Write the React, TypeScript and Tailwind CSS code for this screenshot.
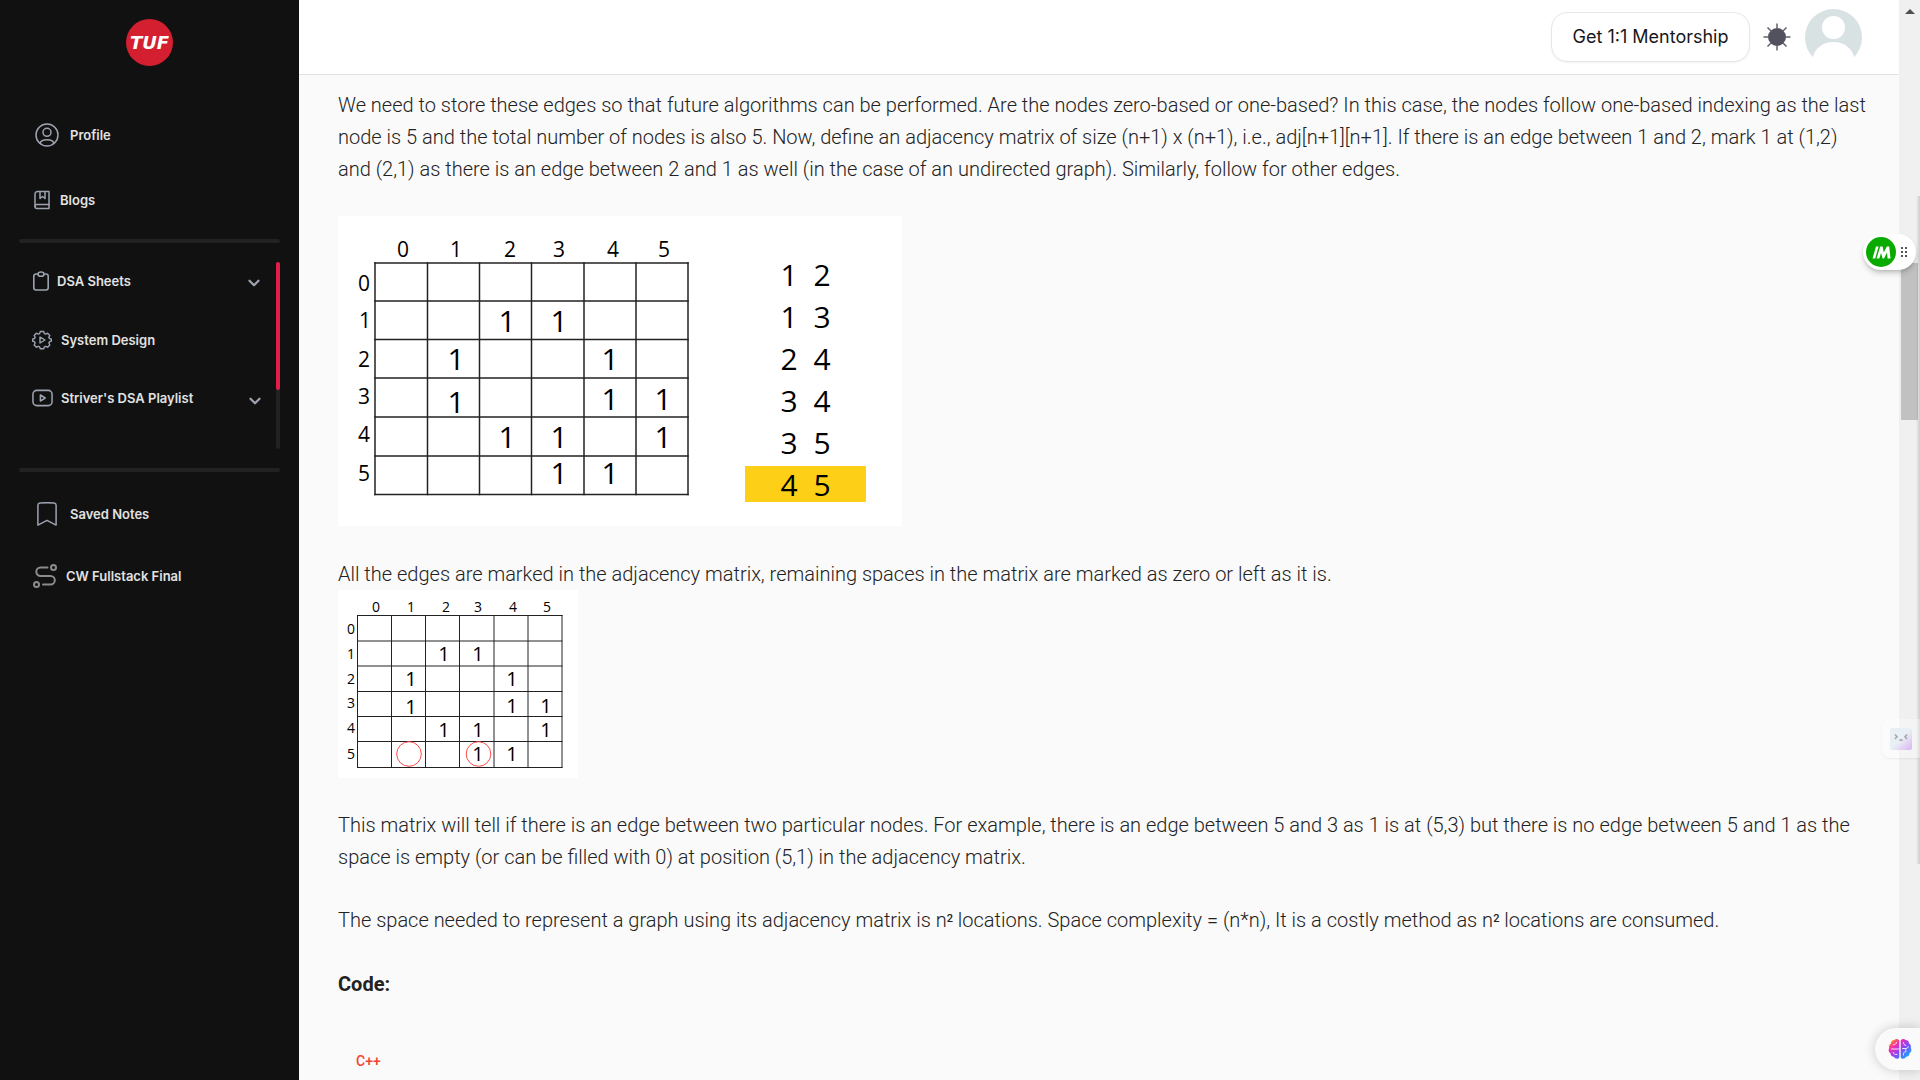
import React from "react";
import { ChevronDown } from "lucide-react";

type IconProps = { className?: string };

const stroke = {
  fill: "none",
  stroke: "currentColor",
  strokeLinecap: "round" as const,
  strokeLinejoin: "round" as const,
};

function ProfileIcon({ className }: IconProps) {
  return (
    <svg viewBox="0 0 24 24" className={className} {...stroke} strokeWidth="1.5" aria-hidden="true">
      <circle cx="12" cy="12" r="11" />
      <circle cx="12" cy="9.3" r="4" />
      <path d="M5 20.3c.6-2.3 3.200-3.500 7-3.500s6.400 1.200 7 3.500" />
    </svg>
  );
}

function BlogIcon({ className }: IconProps) {
  return (
    <svg viewBox="0 0 18 20" className={className} {...stroke} strokeWidth="1.5" aria-hidden="true">
      <path d="M16 14.500V1.500H4.500A2.500 2.500 0 0 0 2 4v12.500" />
      <path d="M16 14.500H4a2 2 0 0 0 0 4h12z" />
      <path d="M7 1.500v7l2.500-2 2.500 2v-7" />
    </svg>
  );
}

function ClipboardIcon({ className }: IconProps) {
  return (
    <svg viewBox="0 0 18 20" className={className} {...stroke} strokeWidth="1.600" aria-hidden="true">
      <path d="M5.500 3H4a2.200 2.200 0 0 0-2.200 2.200v11.600A2.200 2.200 0 0 0 4 19h10a2.200 2.200 0 0 0 2.200-2.200V5.200A2.200 2.200 0 0 0 14 3h-1.500" />
      <path d="M6 3.200C6 1.800 7.200 1 9 1s3 .8 3 2.200S10.800 5.300 9 5.300 6 4.600 6 3.200z" />
    </svg>
  );
}

function GearPlayIcon({ className }: IconProps) {
  return (
    <svg viewBox="0 0 20 20" className={className} {...stroke} strokeWidth="1.400" aria-hidden="true">
      <path d="M8.300 1.500h3.400l.7 2.100 1.200.5 2-.9 2.200 2.200-.9 2 .5 1.100 2 .7v1.800l-2 .8-.5 1.200.9 2-2.200 2.200-2-.9-1.200.5-.7 1.900H8.300l-.7-1.900-1.200-.5-2 .9-2.200-2.200.9-2-.5-1.200-2-.8V9.200l2-.7.5-1.100-.9-2 2.200-2.200 2 .9 1.200-.5z" />
      <path d="M8 7v6l5-3z" />
    </svg>
  );
}

function VideoIcon({ className }: IconProps) {
  return (
    <svg viewBox="0 0 22 18" className={className} {...stroke} strokeWidth="1.600" aria-hidden="true">
      <rect x="1" y="1" width="20" height="16" rx="4" />
      <path d="M8.800 5.800v6.400l5-3.200z" />
    </svg>
  );
}

function BookmarkIcon({ className }: IconProps) {
  return (
    <svg viewBox="0 0 20 24" className={className} {...stroke} strokeWidth="1.500" aria-hidden="true">
      <path d="M.9 3.200C.9 2 1.600 1.300 2.800 1.100a60 60 0 0 1 14.400 0c1.200.2 1.900.9 1.900 2.100v19.900L10 18.300.9 23.100z" />
    </svg>
  );
}

function RouteIcon({ className }: IconProps) {
  return (
    <svg viewBox="0 0 24 24" className={className} {...stroke} strokeWidth="2" aria-hidden="true">
      <circle cx="20.500" cy="3.500" r="2.500" />
      <circle cx="3.500" cy="20.500" r="2.500" />
      <path d="M14.500 3.500H7.500a4.200 4.200 0 0 0 0 8.400h10a4.300 4.300 0 0 1 0 8.600H10" />
    </svg>
  );
}

function SunIcon({ className }: IconProps) {
  return (
    <svg viewBox="0 0 28 28" className={className} aria-hidden="true">
      <circle cx="14" cy="14" r="9" fill="#52525e" />
      <path
        d="M14 .5v5M14 22.500v5M.5 14h5M22.500 14h5M4.500 4.500l3.500 3.500M20 20l3.500 3.500M4.500 23.500L8 20M20 8l3.500-3.500"
        stroke="#62626c"
        strokeWidth="1.500"
      />
    </svg>
  );
}

function AvatarIcon({ className }: IconProps) {
  return (
    <svg viewBox="0 0 57 57" className={className} aria-hidden="true">
      <circle cx="28.500" cy="28.500" r="28.500" fill="#d9e2e3" />
      <circle cx="28.500" cy="18.500" r="11.500" fill="#fff" />
      <path d="M8 48c2-9 10.500-15 20.500-15S47 39 49 48v9H8z" fill="#fff" />
    </svg>
  );
}

function BrainIcon({ className }: IconProps) {
  return (
    <svg viewBox="0 0 24 22" className={className} aria-hidden="true">
      <defs>
        <linearGradient id="brain" x1="0" y1="0" x2="1" y2="1">
          <stop offset="0.100" stopColor="#ff8a1f" />
          <stop offset="0.300" stopColor="#f52cae" />
          <stop offset="0.550" stopColor="#8b46f5" />
          <stop offset="0.850" stopColor="#1fa0ff" />
        </linearGradient>
      </defs>
      <path
        d="M11.300 2.500C10.500.6 7.500.4 6.300 2 4.300 2 2.800 3.600 3 5.600 1.300 6.500.6 8.400 1.200 10c-1.200 1.800-.6 4.300 1.300 5.200 0 2 1.500 3.400 3.300 3.600 1.200 2.400 4.600 2.600 5.500.6zM12.700 2.500c.8-1.900 3.800-2.100 5-.5 2 0 3.500 1.600 3.300 3.600 1.700.9 2.400 2.800 1.800 4.400 1.200 1.800.6 4.300-1.300 5.200 0 2-1.500 3.400-3.300 3.600-1.200 2.400-4.600 2.600-5.500.6z"
        fill="url(#brain)"
      />
      <path
        d="M3.500 11h7.500M5.500 6.800c2 0 2.800-1.200 3-2.300M5.300 14.500c.2 1.500 1.600 2.300 3.700 2M15.500 4.500c0 1.800.5 2.500 2.300 2.800M14.500 10.500h3c1.500 0 2.500-.8 2.800-1.800M17.800 10.500v2M15.500 17v-1.500c0-1 1-1.800 2.500-1.800"
        fill="none"
        stroke="#fff"
        strokeOpacity="0.850"
        strokeWidth="1"
        strokeLinecap="round"
      />
    </svg>
  );
}

const itemText = "font-['Inter',sans-serif] text-[13px] leading-5 font-semibold text-[#e2e2e2]";

function Divider() {
  return <hr className="mx-[19px] h-1 rounded-full border-0 bg-[#222222]" />;
}

function Sidebar() {
  return (
    <aside className="w-[299px] shrink-0 bg-[#111111] text-[#9ca3af]">
      <a href="#home" className="mx-auto mt-[19px] flex size-[47px] items-center justify-center rounded-full bg-[#d41f30]">
        <span className="font-['DejaVu_Sans',sans-serif] text-lg leading-none font-bold text-white italic">TUF</span>
      </a>

      <nav aria-label="Main" className="mt-[54px]">
        <a href="#profile" className="flex h-[30px] items-center gap-[11px] pl-[35px]">
          <ProfileIcon className="size-6" />
          <span className={itemText}>Profile</span>
        </a>
        <a href="#blogs" className="mt-[35px] flex h-[30px] items-center gap-[9px] pl-[33px]">
          <BlogIcon className="h-5 w-[18px]" />
          <span className={itemText}>Blogs</span>
        </a>
      </nav>

      <div className="mt-6">
        <Divider />
      </div>

      <div className="mt-[19px] mr-[19px] flex justify-between">
        <nav aria-label="Courses" className="flex w-[264px] flex-col">
          <button type="button" className="flex h-[38px] items-center pr-px pl-8 text-left">
            <ClipboardIcon className="h-5 w-[18px]" />
            <span className={itemText + " ml-[7px] grow"}>DSA Sheets</span>
            <ChevronDown className="mt-1 size-[18px]" strokeWidth={3} />
          </button>
          <a href="#system-design" className="mt-[21px] flex h-[38px] items-center gap-[9px] pl-8">
            <GearPlayIcon className="size-5" />
            <span className={itemText}>System Design</span>
          </a>
          <button type="button" className="mt-5 flex h-[38px] items-center pl-8 text-left">
            <VideoIcon className="h-[18px] w-[21px]" />
            <span className={itemText + " ml-2 grow"}>Striver's DSA Playlist</span>
            <ChevronDown className="mt-1.5 size-[18px]" strokeWidth={3} />
          </button>
        </nav>
        <div className="h-[187px] w-1 rounded-full bg-[#222222]">
          <div className="h-32 rounded-full bg-[#e11d48]" />
        </div>
      </div>

      <div className="mt-[19px]">
        <Divider />
      </div>

      <nav aria-label="Personal" className="mt-[27px]">
        <a href="#notes" className="flex h-[30px] items-center gap-[13px] pl-[37px]">
          <BookmarkIcon className="h-6 w-5" />
          <span className={itemText}>Saved Notes</span>
        </a>
        <a href="#cw-fullstack" className="mt-8 flex h-[30px] items-center gap-[9px] pl-[33px]">
          <RouteIcon className="size-6 text-[#8b8b8b]" />
          <span className={itemText}>CW Fullstack Final</span>
        </a>
      </nav>
    </aside>
  );
}

function Header() {
  return (
    <header className="flex h-[75px] items-center justify-end border-b border-[#e2e2e4] bg-white pr-[37px]">
      <button
        type="button"
        className="h-[50px] w-[199px] rounded-2xl border border-gray-200 bg-white font-['Inter',sans-serif] text-lg text-[#18181b] shadow-xs"
      >
        Get 1:1 Mentorship
      </button>
      <button type="button" aria-label="Toggle theme" className="ml-[13px]">
        <SunIcon className="size-7" />
      </button>
      <button type="button" aria-label="Account" className="ml-[14px]">
        <AvatarIcon className="size-[57px]" />
      </button>
    </header>
  );
}

type Point = { x: number; y: number; t: string };
const pts = (list: [number, number, string][]): Point[] => list.map(([x, y, t]) => ({ x, y, t }));

const bigLabels = pts([
  [65, 41, "0"], [118, 41, "1"], [172, 41, "2"], [221, 41, "3"], [275, 41, "4"], [326, 41, "5"],
  [26, 75, "0"], [27, 112, "1"], [26, 151, "2"], [26, 188, "3"], [26, 226, "4"], [26, 265, "5"],
]);
const bigMarks = pts([
  [169, 116, "1"], [221, 116, "1"], [118, 154, "1"], [272, 154, "1"], [118, 197, "1"], [272, 194, "1"],
  [325, 194, "1"], [169, 232, "1"], [221, 232, "1"], [325, 232, "1"], [221, 268, "1"], [272, 268, "1"],
]);
const pairs = pts([
  [451, 70, "1"], [484, 70, "2"], [451, 112, "1"], [484, 112, "3"], [451, 154, "2"], [484, 154, "4"],
  [451, 196, "3"], [484, 196, "4"], [451, 238, "3"], [484, 238, "5"], [451, 280, "4"], [484, 280, "5"],
]);
const smallLabels = pts([
  [38, 22, "0"], [73, 22, "1"], [108, 22, "2"], [140, 22, "3"], [175, 22, "4"], [209, 22, "5"],
  [13, 44, "0"], [13, 69, "1"], [13, 94, "2"], [13, 118, "3"], [13, 143, "4"], [13, 169, "5"],
]);
const smallMarks = pts([
  [106, 71, "1"], [140, 71, "1"], [73, 96, "1"], [174, 96, "1"], [73, 124, "1"], [174, 123, "1"],
  [208, 123, "1"], [106, 147, "1"], [140, 147, "1"], [208, 147, "1"], [140, 171, "1"], [174, 171, "1"],
]);

function Labels({ points, size }: { points: Point[]; size: number }) {
  return (
    <g fontSize={size} textAnchor="middle">
      {points.map((p) => (
        <text key={p.x + "-" + p.y} x={p.x} y={p.y}>
          {p.t}
        </text>
      ))}
    </g>
  );
}

function Grid({ xs, ys, width }: { xs: number[]; ys: number[]; width: number }) {
  const left = xs[0];
  const right = xs[xs.length - 1];
  const top = ys[0];
  const bottom = ys[ys.length - 1];
  return (
    <g stroke="#222" strokeWidth={width} strokeLinecap="square">
      {xs.map((x) => (
        <line key={"x" + x} x1={x} x2={x} y1={top} y2={bottom} />
      ))}
      {ys.map((y) => (
        <line key={"y" + y} x1={left} x2={right} y1={y} y2={y} />
      ))}
    </g>
  );
}

function EdgeFigure() {
  return (
    <svg
      viewBox="0 0 564 310"
      className="mt-[31px] block w-[564px] max-w-full bg-white fill-black font-['Open_Sans',sans-serif] font-normal"
      role="img"
      aria-label="Adjacency matrix being filled from the list of edges"
    >
      <Grid xs={[37, 89.500, 141.500, 193.500, 246, 298, 350]} ys={[47, 85, 123.500, 162, 201, 240, 278.500]} width={1.500} />
      <Labels points={bigLabels} size={21} />
      <Labels points={bigMarks} size={30} />
      <rect x="407" y="250" width="121" height="36" fill="#fdd017" />
      <Labels points={pairs} size={30} />
    </svg>
  );
}

function MatrixFigure() {
  return (
    <svg
      viewBox="0 0 240 188"
      className="block w-60 max-w-full bg-white font-['Open_Sans',sans-serif] font-normal"
      role="img"
      aria-label="Completed adjacency matrix"
    >
      <Grid xs={[19.500, 53.500, 87.500, 121.500, 156, 190, 224]} ys={[25.500, 51, 76, 101.500, 126.500, 151.500, 177.500]} width={1} />
      <Labels points={smallLabels} size={14} />
      <Labels points={smallMarks} size={20} />
      <g fill="none" stroke="#ff4a4a" strokeWidth="1">
        <circle cx="71" cy="164" r="12.300" />
        <circle cx="140.500" cy="164" r="12.300" />
      </g>
    </svg>
  );
}

function Article() {
  return (
    <article className="pt-[14px] pr-[29px] pl-[39px] font-['Roboto',sans-serif] text-xl leading-8 font-light text-[#222222]">
      <p>
        We need to store these edges so that future algorithms can be performed. Are the nodes zero-based or one-based?
        In this case, the nodes follow one-based indexing as the last node is 5 and the total number of nodes is also 5.
        Now, define an adjacency matrix of size (n+1) x (n+1), i.e., adj[n+1][n+1]. If there is an edge between 1 and 2,
        mark 1 at (1,2) and (2,1) as there is an edge between 2 and 1 as well (in the case of an undirected graph).
        Similarly, follow for other edges.
      </p>
      <EdgeFigure />
      <p className="mt-8">
        All the edges are marked in the adjacency matrix, remaining spaces in the matrix are marked as zero or left as
        it is.
      </p>
      <MatrixFigure />
      <p className="mt-[31px]">
        This matrix will tell if there is an edge between two particular nodes. For example, there is an edge between 5
        and 3 as 1 is at (5,3) but there is no edge between 5 and 1 as the space is empty (or can be filled with 0) at
        position (5,1) in the adjacency matrix.
      </p>
      <p className="mt-[31px]">
        The space needed to represent a graph using its adjacency matrix is n
        <sup className="text-[11px] font-medium">2</sup> locations. Space complexity = (n*n), It is a costly method as n
        <sup className="text-[11px] font-medium">2</sup> locations are consumed.
      </p>
      <h2 className="mt-8 text-xl leading-8 font-bold">Code:</h2>
      <div role="tablist" className="mt-[49px] flex pl-[18px]">
        <button type="button" role="tab" aria-selected="true" className="text-sm leading-6 font-medium text-[#f4442e]">
          C++
        </button>
      </div>
    </article>
  );
}

function ScrollTrack() {
  return (
    <div className="relative w-[21px] shrink-0 bg-[#f0f0f0]" aria-hidden="true">
      <div className="flex h-[263px] justify-center pt-[9px]">
        <svg viewBox="0 0 10 5" className="h-[5px] w-[10px]">
          <path d="M0 5l5-5 5 5z" fill="#505050" />
        </svg>
      </div>
      <div className="ml-0.5 h-[157px] w-[17px] bg-[#c1c1c1]" />
      <div className="absolute top-[196px] right-0 h-[668px] w-1 bg-linear-to-r from-transparent to-black/15" />
    </div>
  );
}

function Widgets() {
  return (
    <>
      <div className="fixed top-[234px] right-1 flex h-9 w-[53px] items-center rounded-full bg-white pl-[3px] shadow-md shadow-black/20">
        <button type="button" aria-label="Open helper" className="flex size-[30px] items-center justify-center rounded-full bg-[#0aab00]">
          <svg viewBox="0 0 19 13" className="h-[13px] w-[19px]" aria-hidden="true">
            <path
              d="M.5 12.500L4 .5h2.600l-3.400 12zM4.600 12.500L8.200.5h2.400l1.200 6L14.800.5h2.400l1.300 12h-2.900l-.6-6-3 6h-1.400L9 7l-1.700 5.500z"
              fill="#fff"
            />
          </svg>
        </button>
        <svg viewBox="0 0 6 10" className="ml-[5px] h-[10px] w-1.5" fill="#555" aria-hidden="true">
          <path d="M0 0h2v2H0zM4 0h2v2H4zM0 4h2v2H0zM4 4h2v2H4zM0 8h2v2H0zM4 8h2v2H4z" />
        </svg>
      </div>
      <button
        type="button"
        aria-label="Open companion"
        className="fixed top-[719px] right-0 flex h-[39px] w-[38px] items-center rounded-l-lg bg-white/30 pl-2 shadow-sm shadow-black/5"
      >
        <span className="flex size-[22px] items-start justify-center rounded-xs bg-linear-to-br from-[#e9f0f5] from-50% to-[#d9b3f0] pt-1.5">
          <svg viewBox="0 0 14 7" className="h-[7px] w-[14px]" fill="none" stroke="#a3a3ab" strokeWidth="1.500" aria-hidden="true">
            <path d="M1 .5l2 2.200-2 2.200M13 .5l-2 2.200 2 2.200M5.500 5.500c.8 1 2.200 1 3 0" />
          </svg>
        </span>
      </button>
      <button
        type="button"
        aria-label="Open assistant"
        className="fixed top-[1028px] right-0 flex h-[42px] w-[45px] items-center rounded-l-full bg-[#fafafa] pl-[13px] shadow-[0_0_12px_rgba(0,0,0,0.2)]"
      >
        <BrainIcon className="h-[22px] w-6" />
      </button>
    </>
  );
}

export default function App() {
  return (
    <div className="flex min-h-screen bg-[#fafafa]">
      <Sidebar />
      <main className="min-w-0 grow">
        <Header />
        <Article />
      </main>
      <ScrollTrack />
      <Widgets />
    </div>
  );
}
